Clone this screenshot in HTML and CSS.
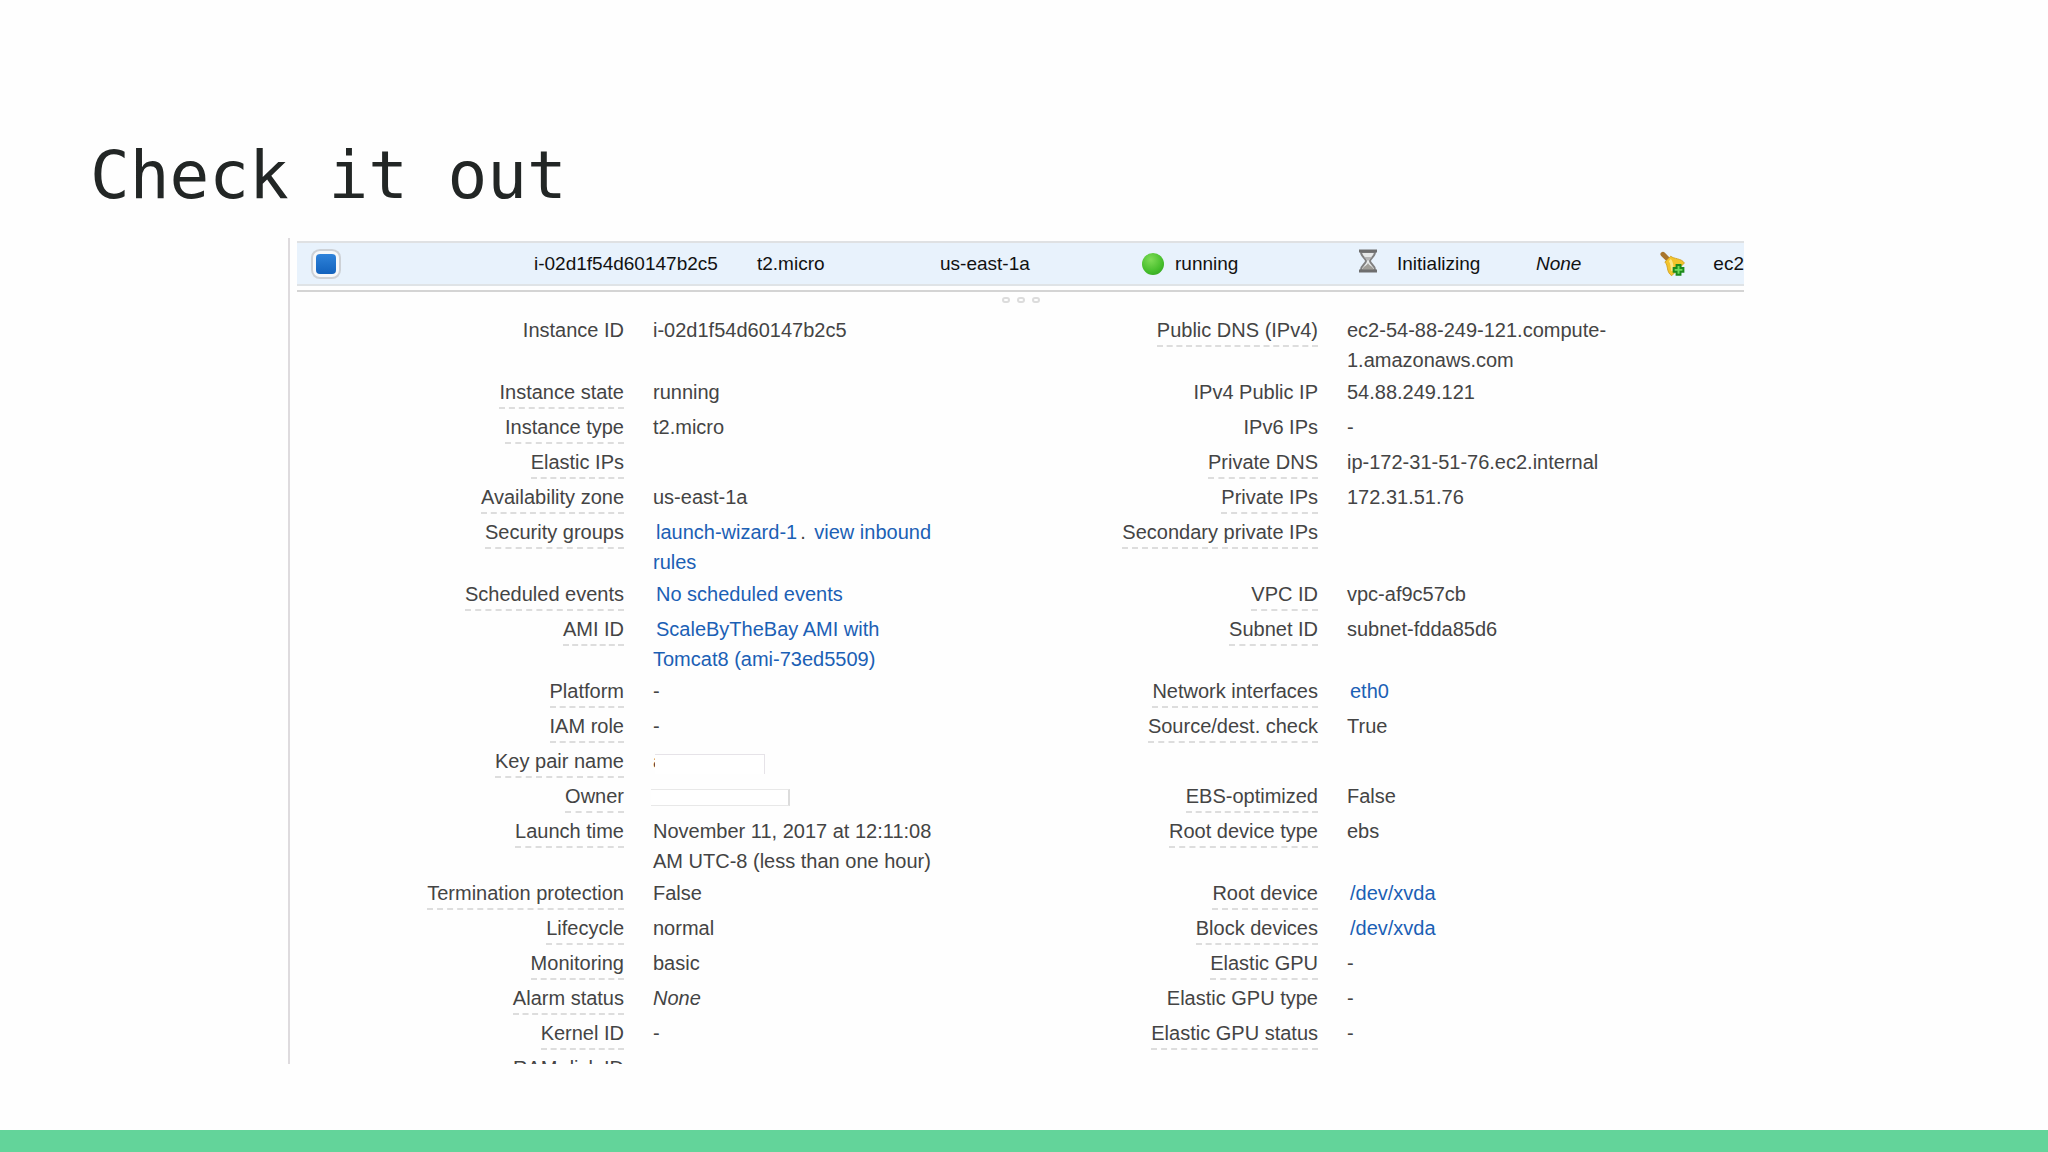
FILE: index.html
```html
<!DOCTYPE html>
<html lang="en">
<head>
    <meta charset="UTF-8">
    <meta name="viewport" content="width=device-width, initial-scale=1.0">
    <title>Check it out</title>
    <link rel="stylesheet" href="styles.css">
</head>
<body>
    <h1>Check it out</h1>

    <main class="console">
        <table class="instance-row">
            <tr>
                <td class="col-check"><input type="checkbox" class="pick" aria-label="Select instance" checked></td>
                <td class="col-id">i-02d1f54d60147b2c5</td>
                <td class="col-type">t2.micro</td>
                <td class="col-zone">us-east-1a</td>
                <td class="col-state"><span class="cell"><span class="dot"></span>running</span></td>
                <td class="col-status">
                    <span class="cell">
                        <svg class="hourglass" viewBox="0 0 20 24" width="20" height="24">
                            <path d="M3 3C3 8 8 9 8 12C8 15 3 16 3 21H17C17 16 12 15 12 12C12 9 17 8 17 3Z" fill="#e6e8e8" stroke="#808080" stroke-width="2"/>
                            <path d="M6 8H14L10 12Z" fill="#b5b5b5"/>
                            <path d="M4 21C5 17 9 17 10 14C11 17 15 17 16 21Z" fill="#a09e98"/>
                            <path d="M1 2H19M1 22H19" stroke="#6e6e6e" stroke-width="3"/>
                        </svg>
                        Initializing
                    </span>
                </td>
                <td class="col-alarm"><i>None</i></td>
                <td class="col-dns">
                    <span class="cell">
                        <svg class="bell" viewBox="0 0 26 26" width="26" height="26">
                            <path d="M3 3L8 8" stroke="#a8752c" stroke-width="5" stroke-linecap="round"/>
                            <path d="M5 11L11 5C14 8 22 7 25 12L12 25C6 21 9 15 5 11Z" fill="#f3c42b" stroke="#d3a526"/>
                            <path d="M10 9C13 12 12 17 13 20" fill="none" stroke="#fbe584" stroke-width="3"/>
                            <path d="M17 14H21V17H24V21H21V24H17V21H14V17H17Z" fill="#6fdc5c" stroke="#1c8a1c" stroke-width="2"/>
                        </svg>
                        ec2
                    </span>
                </td>
            </tr>
        </table>

        <div class="gripper"><span></span><span></span><span></span></div>

        <table class="details">
            <tr><th><span class="plain">Instance ID</span></th><td>i-02d1f54d60147b2c5</td><th><span>Public DNS (IPv4)</span></th><td>ec2-54-88-249-121.compute-<br>1.amazonaws.com</td></tr>
            <tr><th><span>Instance state</span></th><td>running</td><th><span class="plain">IPv4 Public IP</span></th><td>54.88.249.121</td></tr>
            <tr><th><span>Instance type</span></th><td>t2.micro</td><th><span class="plain">IPv6 IPs</span></th><td>-</td></tr>
            <tr><th><span>Elastic IPs</span></th><td></td><th><span>Private DNS</span></th><td>ip-172-31-51-76.ec2.internal</td></tr>
            <tr><th><span>Availability zone</span></th><td>us-east-1a</td><th><span>Private IPs</span></th><td>172.31.51.76</td></tr>
            <tr><th><span>Security groups</span></th><td><a href="#">launch-wizard-1</a>. <a href="#">view inbound rules</a></td><th><span>Secondary private IPs</span></th><td></td></tr>
            <tr><th><span>Scheduled events</span></th><td><a href="#">No scheduled events</a></td><th><span>VPC ID</span></th><td>vpc-af9c57cb</td></tr>
            <tr><th><span>AMI ID</span></th><td><a href="#">ScaleByTheBay AMI with Tomcat8 (ami-73ed5509)</a></td><th><span>Subnet ID</span></th><td>subnet-fdda85d6</td></tr>
            <tr><th><span>Platform</span></th><td>-</td><th><span>Network interfaces</span></th><td><a href="#">eth0</a></td></tr>
            <tr><th><span>IAM role</span></th><td>-</td><th><span>Source/dest. check</span></th><td>True</td></tr>
            <tr><th><span>Key pair name</span></th><td><div class="redacted key"><span class="sliver">a</span><span class="cover"></span></div></td><th></th><td></td></tr>
            <tr><th><span>Owner</span></th><td><div class="redacted owner"><span class="cover"></span></div></td><th><span>EBS-optimized</span></th><td>False</td></tr>
            <tr><th><span>Launch time</span></th><td>November 11, 2017 at 12:11:08 AM UTC-8 (less than one hour)</td><th><span>Root device type</span></th><td>ebs</td></tr>
            <tr><th><span>Termination protection</span></th><td>False</td><th><span>Root device</span></th><td><a href="#">/dev/xvda</a></td></tr>
            <tr><th><span>Lifecycle</span></th><td>normal</td><th><span>Block devices</span></th><td><a href="#">/dev/xvda</a></td></tr>
            <tr><th><span>Monitoring</span></th><td>basic</td><th><span>Elastic GPU</span></th><td>-</td></tr>
            <tr><th><span>Alarm status</span></th><td><i>None</i></td><th><span class="plain">Elastic GPU type</span></th><td>-</td></tr>
            <tr><th><span>Kernel ID</span></th><td>-</td><th><span>Elastic GPU status</span></th><td>-</td></tr>
            <tr><th><span>RAM disk ID</span></th><td></td><th></th><td></td></tr>
        </table>
    </main>

    <footer></footer>
</body>
</html>
```
FILE: styles.css
```css
* {
    box-sizing: border-box;
}

body {
    margin: 0;
    height: 100vh;
    display: flex;
    flex-direction: column;
    overflow: hidden;
    background-color: #fefefe;
    color: #444;
    font-family: "Liberation Sans", Arial, sans-serif;
    font-size: 20px;
}

h1 {
    margin: 136px 90px 22px;
    font-family: "DejaVu Sans Mono", monospace;
    font-size: 66px;
    font-weight: normal;
    line-height: 80px;
    color: #222625;
}

.console {
    flex: 1;
    min-height: 0;
    overflow: hidden;
    margin: 0 304px 66px 288px;
    padding: 3px 0 0 7px;
    border-left: 2px solid #dedbde;
}

table {
    width: 100%;
    table-layout: fixed;
    border-collapse: separate;
    border-spacing: 0;
}

th, td {
    padding: 0;
    text-align: left;
    font-weight: normal;
}

.instance-row {
    height: 45px;
    background-color: #e8f2fc;
    border-top: 2px solid #dfe1e3;
    border-bottom: 2px solid #dfe3e6;
    color: #111;
    font-size: 19px;
    white-space: nowrap;
}

.col-check {
    width: 237px;
    padding-left: 15px;
}

.col-id {
    width: 223px;
}

.col-type {
    width: 183px;
}

.col-zone {
    width: 202px;
}

.col-state {
    width: 216px;
}

.col-status {
    width: 178px;
}

.col-alarm {
    width: 124px;
}

.cell {
    display: flex;
    align-items: center;
}

.pick {
    display: block;
    appearance: none;
    width: 20px;
    height: 20px;
    margin: 4px;
    border-radius: 4px;
    background: linear-gradient(#2f83da, #1262bd);
    box-shadow: 0 0 0 3px #f6f8fa, 0 0 0 5px #cdd1d6;
}

.dot {
    width: 22px;
    height: 22px;
    margin-right: 11px;
    border-radius: 50%;
    background: radial-gradient(circle at 40% 30%, #7fdc56, #45bd2b 60%, #2c9a1c);
}

.hourglass {
    margin: 0 19px 6px 0;
}

.bell {
    margin-right: 28px;
}

.gripper {
    display: flex;
    justify-content: center;
    gap: 7px;
    height: 25px;
    margin-top: 4px;
    padding-top: 5px;
    border-top: 2px solid #d4d4d4;
}

.gripper span {
    width: 8px;
    height: 6px;
    border: 2px solid #dcdcdc;
    border-radius: 4px;
}

.details tr {
    height: 35px;
}

.details th,
.details td {
    padding-bottom: 2px;
    line-height: 30px;
    vertical-align: top;
}

.details th {
    width: 327px;
    text-align: right;
}

.details th:nth-child(3) {
    width: 345px;
}

.details th span {
    display: inline-block;
    border-bottom: 2px dashed #ddd;
}

.details th .plain {
    border-bottom: none;
}

.details td {
    width: 349px;
    padding-left: 29px;
    padding-right: 29px;
}

.details td:last-child {
    width: auto;
}

a {
    margin: 0 3px;
    color: #1b60b5;
    text-decoration: none;
}

/* blanked-out values */
.redacted {
    position: relative;
    height: 30px;
}

.cover {
    position: absolute;
    background-color: #fff;
}

.key .cover {
    top: 8px;
    left: 2px;
    width: 110px;
    height: 20px;
    border-top: 1px solid #e6e3e8;
    border-right: 1px solid #e6e3e8;
}

.owner .cover {
    top: 8px;
    left: -2px;
    width: 139px;
    height: 17px;
    border: 1px solid #e8e8e8;
    border-left: none;
    border-right: 2px solid #dcdcdc;
}

footer {
    height: 22px;
    background-color: #63d49a;
}
```
